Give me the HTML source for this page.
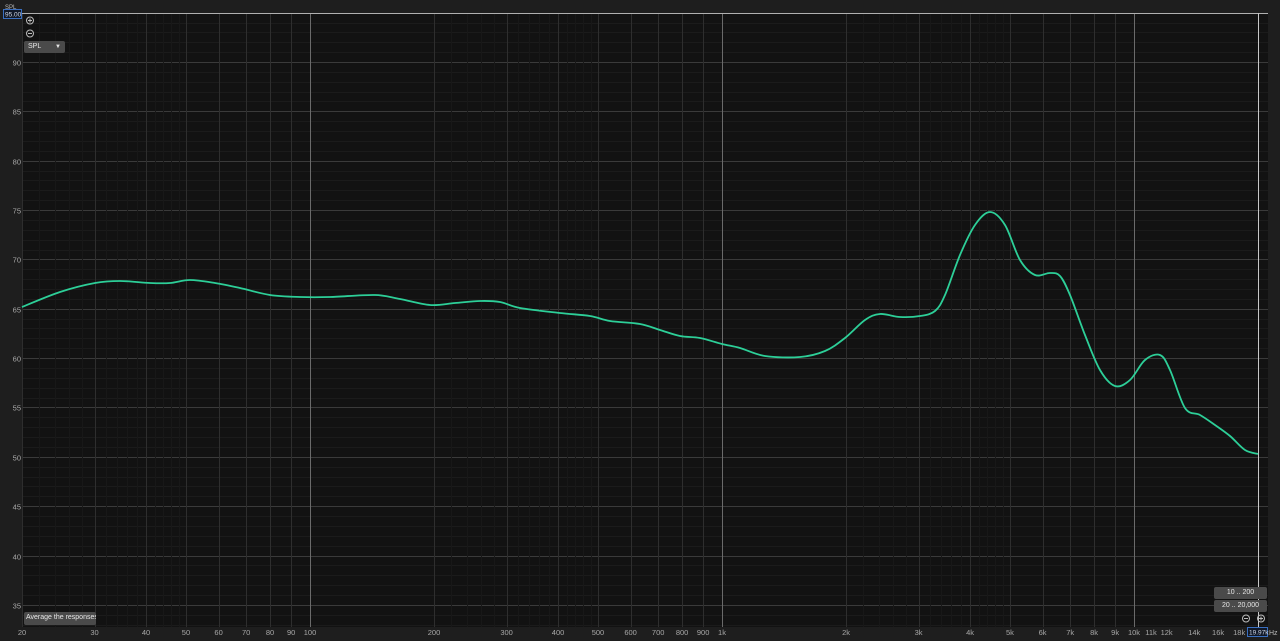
<!DOCTYPE html>
<html><head><meta charset="utf-8"><style>
html,body{margin:0;padding:0;background:#1e1e1e;width:1280px;height:641px;overflow:hidden;font-family:"Liberation Sans",sans-serif}
svg{position:absolute;left:0;top:0}
.btn{position:absolute;background:#4a4a4a;color:#e6e6e6;font-size:7px;border-radius:2px;line-height:12px;box-sizing:border-box;white-space:nowrap;overflow:hidden}
</style></head><body>
<svg id="s" width="1280" height="641" xmlns="http://www.w3.org/2000/svg">
<rect x="22" y="13" width="1246" height="614" fill="#121212"/>
<g id="grid"></g>
<line x1="22" y1="13.5" x2="1268" y2="13.5" stroke="#b0b0b0" stroke-width="1"/>
<line x1="1258.5" y1="13" x2="1258.5" y2="627" stroke="#c8c8c8" stroke-width="1"/>
<path id="curve" fill="none" stroke="#2dcf98" stroke-width="1.8" stroke-linejoin="round"/>
<g id="labels" font-family="Liberation Sans, sans-serif" font-size="7.5" fill="#a8a8a8"></g>
<text x="5" y="9" font-size="6" fill="#bbb" font-family="Liberation Sans, sans-serif">SPL</text>
<rect x="3.5" y="9.5" width="18" height="9" fill="#101828" stroke="#3a6fc0"/>
<text x="5" y="16.5" font-size="6.5" fill="#cfd6e6" font-family="Liberation Sans, sans-serif">95.00</text>
<circle cx="30" cy="20.5" r="3.5" fill="none" stroke="#bbb"/><path d="M28 20.5h4M30 18.5v4" stroke="#bbb"/>
<circle cx="30" cy="33.5" r="3.5" fill="none" stroke="#bbb"/><path d="M28 33.5h4" stroke="#bbb"/>
<circle cx="1246" cy="618.5" r="3.5" fill="none" stroke="#bbb"/><path d="M1244 618.5h4" stroke="#bbb"/>
<circle cx="1261" cy="618.5" r="3.5" fill="none" stroke="#bbb"/><path d="M1259 618.5h4M1261 616.5v4" stroke="#bbb"/>
<rect x="1247.5" y="627.5" width="20" height="9" fill="#101828" stroke="#3a6fc0"/>
<text x="1249" y="634.5" font-size="6.5" fill="#cfd6e6" font-family="Liberation Sans, sans-serif">19.97k</text>
<text x="1269" y="635" font-size="7" fill="#bbb" font-family="Liberation Sans, sans-serif">Hz</text>
</svg>
<div class="btn" style="left:24px;top:41px;width:41px;height:12px;padding-left:4px">SPL<span style="position:absolute;right:4px;top:0;font-size:6px">▼</span></div>
<div class="btn" style="left:24px;top:612px;width:72px;height:13px;padding-left:2px">Average the responses</div>
<div class="btn" style="left:1214px;top:587px;width:53px;height:12px;text-align:center">10 .. 200</div>
<div class="btn" style="left:1214px;top:600px;width:53px;height:12px;text-align:center">20 .. 20,000</div>
<script>
const NS="http://www.w3.org/2000/svg";
const X=f=>310+(Math.log10(f)-2)*412;
const Y=d=>62+(90-d)*9.87;
const g=document.getElementById('grid'),L=document.getElementById('labels');
function ln(x1,y1,x2,y2,c){const e=document.createElementNS(NS,'line');e.setAttribute('x1',x1);e.setAttribute('y1',y1);e.setAttribute('x2',x2);e.setAttribute('y2',y2);e.setAttribute('stroke',c);g.appendChild(e);}
function tx(x,y,t,a){const e=document.createElementNS(NS,'text');e.setAttribute('x',x);e.setAttribute('y',y);e.setAttribute('text-anchor',a);e.textContent=t;L.appendChild(e);}
for(let d=33;d<=95;d++){const y=Math.round(Y(d))+.5;if(y<14||y>627)continue;ln(22,y,1268,y,d%5==0?'#3a3a3a':'#1b1b1b');if(d%5==0&&d<95)tx(21,y+3,d,'end');}
for(let dec=10;dec<=10000;dec*=10){for(let m=1;m<10;m++){const f=dec*m;if(f<20)continue;if(m>=2&&m<=4){for(let k=1;k<5;k++){const ff=f+dec*k/5;const x=Math.round(X(ff))+.5;if(x<1268)ln(x,14,x,627,'#181818');}}const x=Math.round(X(f))+.5;if(x>1268)continue;ln(x,14,x,627,m==1?'#6a6a6a':'#2e2e2e');}}
ln(Math.round(X(20000))+.5,14,Math.round(X(20000))+.5,627,'#2e2e2e');
const labs=[20,30,40,50,60,70,80,90,100,200,300,400,500,600,700,800,900,1000,2000,3000,4000,5000,6000,7000,8000,9000,10000,11000,12000,14000,16000,18000];
labs.forEach(f=>{const t=f>=1000?(f/1000)+'k':f;tx(X(f),635,t,'middle');});
const p=[[22,307],[60,292],[95,283],[120,281],[150,283],[170,283],[190,280],[215,283],[240,288],[270,295],[300,297],[330,297],[375,295],[400,299],[430,305],[455,303],[480,301],[500,302],[520,308],[560,313],[590,316],[610,321],[640,324],[660,330],[680,336],[700,338],[722,344],[740,348],[765,356],[800,357],[825,351],[845,338],[865,320],[880,314],[900,317],[920,316],[935,311],[945,295],[960,255],[975,225],[990,212],[1005,225],[1020,260],[1035,275],[1050,273],[1060,276],[1070,295],[1085,335],[1100,370],[1115,386],[1130,380],[1145,360],[1160,355],[1170,370],[1185,408],[1200,415],[1215,425],[1230,436],[1245,450],[1258,454]];
let d='M'+p[0];for(let i=0;i<p.length-1;i++){const a=p[Math.max(0,i-1)],b=p[i],c=p[i+1],e=p[Math.min(p.length-1,i+2)];const c1=[b[0]+(c[0]-a[0])/6,b[1]+(c[1]-a[1])/6],c2=[c[0]-(e[0]-b[0])/6,c[1]-(e[1]-b[1])/6];d+=' C'+c1+' '+c2+' '+c;}
document.getElementById('curve').setAttribute('d',d);
</script>
</body></html>
